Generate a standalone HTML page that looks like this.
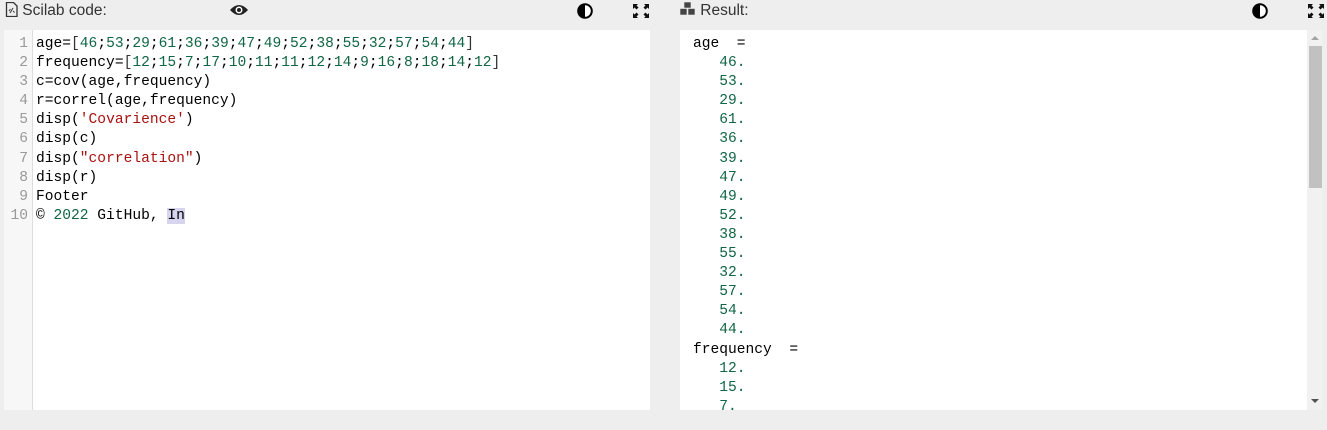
<!DOCTYPE html>
<html><head><style>
body{margin:0;width:1327px;height:430px;background:#eeeeee;position:relative;overflow:hidden;font-family:"Liberation Sans",sans-serif}
.hdr{position:absolute;top:2px;font-size:15.5px;color:#333}
.panel{position:absolute;top:30px;height:380px;background:#fff;overflow:hidden}
.code{font-family:"Liberation Mono",monospace;font-size:14.6px;line-height:19.1px;white-space:pre}
.g{position:absolute;left:0;top:0;width:28px;height:380px;background:#f7f7f7;border-right:1px solid #ddd;color:#999;text-align:right}
.n{color:#164}.b{color:#333}.s{color:#a11}
.ic{position:absolute}
</style></head><body>
<div class="hdr" style="left:5px">
<svg width="13" height="15" style="vertical-align:-2px"><path d="M1.5 .5h7l3.5 3.5v10.5h-10.5z" fill="none" stroke="#333" stroke-width="1.3"/><path d="M4 9l1.5-2M5 11l3-5M8 9l1.5 1.5" stroke="#333" stroke-width="1"/></svg> Scilab code:</div>
<svg class="ic" style="left:229px;top:3px" width="20" height="14"><path d="M1 7Q10-3 19 7Q10 17 1 7z" fill="#222"/><circle cx="10" cy="7" r="3.5" fill="#fff"/><circle cx="10" cy="7" r="2" fill="#222"/></svg>
<svg class="ic" style="left:577px;top:3px" width="16" height="16"><circle cx="8" cy="8" r="6.8" fill="#fff" stroke="#000" stroke-width="2"/><path d="M8 1a7 7 0 0 0 0 14z" fill="#000"/></svg>
<svg class="ic" style="left:633px;top:4px" width="16" height="14" fill="#111"><path d="M0 0h5L3.5 1.5 5.5 3.5 3.5 5.5 1.5 3.5 0 5zM16 0h-5l1.5 1.5-2 2 2 2 2-2L16 5zM0 14h5l-1.5-1.5 2-2-2-2-2 2L0 9zM16 14h-5l1.5-1.5-2-2 2-2 2 2L16 9z"/></svg>
<div class="hdr" style="left:680px"><svg width="16" height="14" style="vertical-align:-1px"><g fill="#444" stroke="#eee" stroke-width="0.6"><rect x="4" y="0" width="7" height="6"/><rect x="0" y="6.5" width="7" height="6.5"/><rect x="8" y="6.5" width="7" height="6.5"/></g></svg> Result:</div>
<svg class="ic" style="left:1252px;top:3px" width="16" height="16"><circle cx="8" cy="8" r="6.8" fill="#fff" stroke="#000" stroke-width="2"/><path d="M8 1a7 7 0 0 0 0 14z" fill="#000"/></svg>
<svg class="ic" style="left:1308px;top:4px" width="16" height="14" fill="#111"><path d="M0 0h5L3.5 1.5 5.5 3.5 3.5 5.5 1.5 3.5 0 5zM16 0h-5l1.5 1.5-2 2 2 2 2-2L16 5zM0 14h5l-1.5-1.5 2-2-2-2-2 2L0 9zM16 14h-5l1.5-1.5-2-2 2-2 2 2L16 9z"/></svg>

<div class="panel code" style="left:4px;width:646px">
<div class="g" style="padding-top:5px;height:375px"><div style="padding-right:4px">1
2
3
4
5
6
7
8
9
10</div></div>
<div style="position:absolute;left:32px;top:5px">age=<span class="b">[</span><span class="n">46</span>;<span class="n">53</span>;<span class="n">29</span>;<span class="n">61</span>;<span class="n">36</span>;<span class="n">39</span>;<span class="n">47</span>;<span class="n">49</span>;<span class="n">52</span>;<span class="n">38</span>;<span class="n">55</span>;<span class="n">32</span>;<span class="n">57</span>;<span class="n">54</span>;<span class="n">44</span><span class="b">]</span>
frequency=<span class="b">[</span><span class="n">12</span>;<span class="n">15</span>;<span class="n">7</span>;<span class="n">17</span>;<span class="n">10</span>;<span class="n">11</span>;<span class="n">11</span>;<span class="n">12</span>;<span class="n">14</span>;<span class="n">9</span>;<span class="n">16</span>;<span class="n">8</span>;<span class="n">18</span>;<span class="n">14</span>;<span class="n">12</span><span class="b">]</span>
c=cov(age,frequency)
r=correl(age,frequency)
disp(<span class="s">'Covarience'</span>)
disp(c)
disp(<span class="s">"correlation"</span>)
disp(r)
Footer
© <span class="n">2022</span> GitHub, <span style="background:#d7d4f0">In</span></div>
</div>

<div class="panel code" style="left:680px;width:643px">
<div style="position:absolute;left:13px;top:5px"><span>age  =</span>
<span class="n">   46.
   53.
   29.
   61.
   36.
   39.
   47.
   49.
   52.
   38.
   55.
   32.
   57.
   54.
   44.</span>
frequency  =
<span class="n">   12.
   15.
   7.</span></div>
<div style="position:absolute;left:627px;top:0;width:16px;height:380px;background:#f1f1f1"></div>
<div style="position:absolute;left:629px;top:16px;width:13px;height:142px;background:#c1c1c1"></div>
<div style="position:absolute;left:631px;top:6px;width:0;height:0;border-left:4px solid transparent;border-right:4px solid transparent;border-bottom:4px solid #a3a3a3"></div>
<div style="position:absolute;left:631px;top:369px;width:0;height:0;border-left:4px solid transparent;border-right:4px solid transparent;border-top:4px solid #505050"></div>
</div>
</body></html>
